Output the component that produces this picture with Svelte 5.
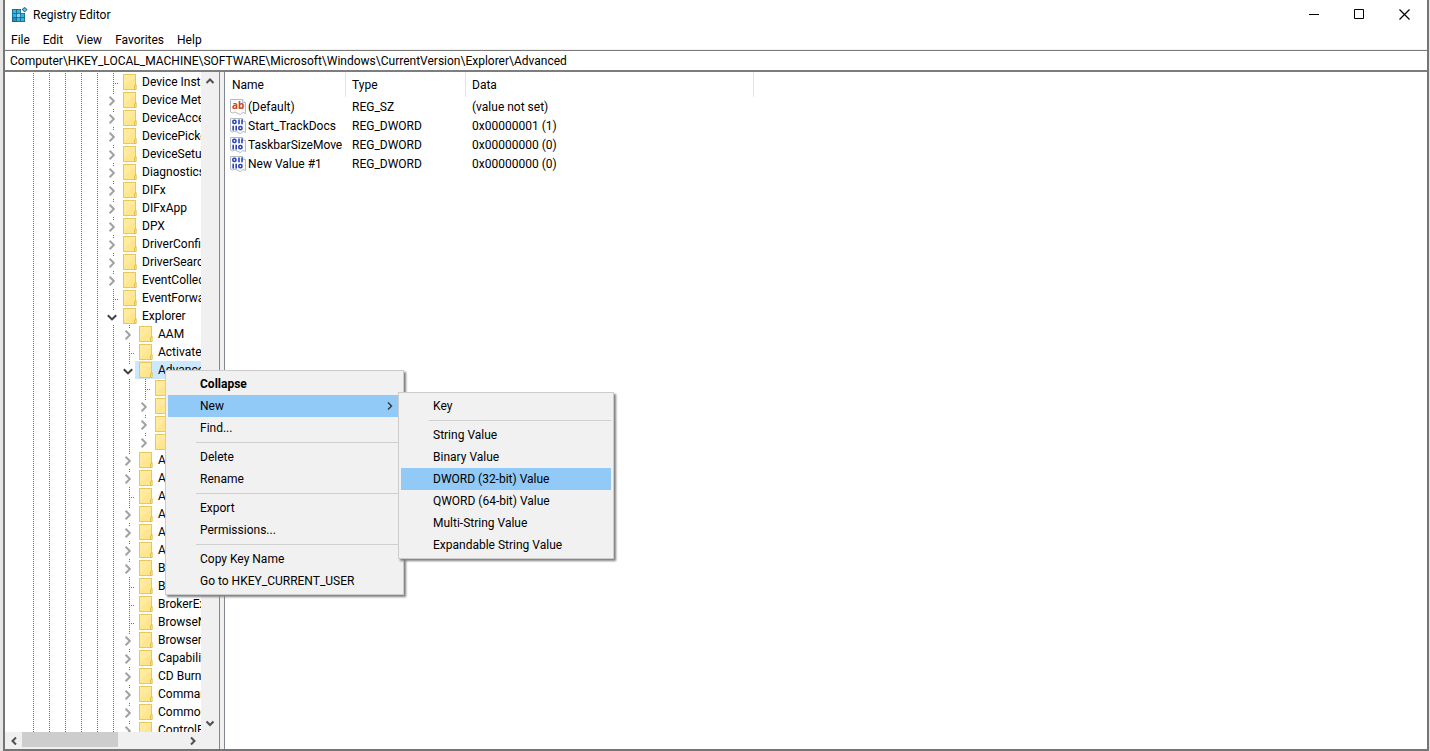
<script>
  const menus = ['File', 'Edit', 'View', 'Favorites', 'Help'];
  let path = $state('Computer\\HKEY_LOCAL_MACHINE\\SOFTWARE\\Microsoft\\Windows\\CurrentVersion\\Explorer\\Advanced');

  // kind: c = collapsed, o = open, n = no sub-keys
  const keys = [
    ['Device Installer', 0, 'n'], ['Device Metadata', 0, 'c'], ['DeviceAccess', 0, 'c'],
    ['DevicePicker', 0, 'c'], ['DeviceSetup', 0, 'c'], ['Diagnostics', 0, 'c'],
    ['DIFx', 0, 'c'], ['DIFxApp', 0, 'c'], ['DPX', 0, 'c'], ['DriverConfig', 0, 'c'],
    ['DriverSearching', 0, 'c'], ['EventCollector', 0, 'c'], ['EventForwarding', 0, 'n'],
    ['Explorer', 0, 'o'], ['AAM', 1, 'c'], ['ActivateApp', 1, 'n'], ['Advanced', 1, 'o'],
    ['', 2, 'n'], ['', 2, 'c'], ['', 2, 'c'], ['', 2, 'c'],
    ['A', 1, 'c'], ['A', 1, 'c'], ['A', 1, 'n'], ['A', 1, 'c'], ['A', 1, 'c'], ['A', 1, 'c'],
    ['B', 1, 'c'], ['B', 1, 'n'], ['BrokerExtensions', 1, 'n'], ['BrowseNewProcess', 1, 'n'],
    ['Browser Helper', 1, 'c'], ['Capabilities', 1, 'c'], ['CD Burning', 1, 'c'],
    ['CommandStore', 1, 'c'], ['CommonPlaces', 1, 'c'], ['ControlPanel', 1, 'c']
  ].map(([name, depth, kind]) => ({ name, depth, kind }));

  const values = [
    ['(Default)', 'REG_SZ', '(value not set)'],
    ['Start_TrackDocs', 'REG_DWORD', '0x00000001 (1)'],
    ['TaskbarSizeMove', 'REG_DWORD', '0x00000000 (0)'],
    ['New Value #1', 'REG_DWORD', '0x00000000 (0)']
  ];

  const contextMenu = ['Collapse', 'New', 'Find...', null, 'Delete', 'Rename', null, 'Export', 'Permissions...', null, 'Copy Key Name', 'Go to HKEY_CURRENT_USER'];
  const newMenu = ['Key', null, 'String Value', 'Binary Value', 'DWORD (32-bit) Value', 'QWORD (64-bit) Value', 'Multi-String Value', 'Expandable String Value'];
</script>

{#snippet chevron(dir)}
  <svg class="chev" width="10" height="10" viewBox="0 0 10 10" aria-hidden="true">
    {#if dir === 'up'}<path d="M1.5 7 5 3.5 8.5 7" />
    {:else if dir === 'down'}<path d="M1.5 3.5 5 7 8.5 3.5" />
    {:else if dir === 'left'}<path d="M7 1.5 3.5 5 7 8.5" />
    {:else}<path d="M3 1.5 6.5 5 3 8.5" />{/if}
  </svg>
{/snippet}

<div class="window">
  <header class="title">
    <svg width="16" height="16" viewBox="0 0 16 16" aria-hidden="true">
      <rect x="0" y="2" width="13" height="13" fill="#17597c" />
      <g fill="#35b4e2">
        <rect x="0.7" y="2.7" width="3.4" height="3.4" /><rect x="4.8" y="2.7" width="3.4" height="3.4" />
        <rect x="0.7" y="6.8" width="3.4" height="3.4" /><rect x="8.9" y="6.8" width="3.4" height="3.4" />
        <rect x="4.8" y="10.9" width="3.4" height="3.4" /><rect x="8.9" y="10.9" width="3.4" height="3.4" />
      </g>
      <rect x="4.8" y="6.8" width="3.4" height="3.4" fill="#7bdcf5" />
      <rect x="0.7" y="10.9" width="3.4" height="3.4" fill="#1f8fc4" />
      <rect x="8.9" y="2" width="4.2" height="4.1" fill="#fff" />
      <path d="M12.6 -0.2 15.6 2.6 12.6 5.4 9.6 2.6Z" fill="#2d7fa4" />
      <path d="M12.6 1.4 14 2.6 12.6 3.9 11.2 2.6Z" fill="#76d3f2" />
    </svg>
    <h1>Registry Editor</h1>
    <button aria-label="Minimize"><svg width="12" height="12" viewBox="0 0 12 12"><path d="M1 5.5H11" /></svg></button>
    <button aria-label="Maximize"><svg width="12" height="12" viewBox="0 0 12 12"><path d="M1.5 0.5H10.5V9.5H1.5Z" /></svg></button>
    <button aria-label="Close"><svg width="12" height="12" viewBox="0 0 12 12"><path stroke-width="1.2" d="M1.5 0.5 11.5 10.5M11.5 0.5 1.5 10.5" /></svg></button>
  </header>

  <nav class="menubar">
    {#each menus as m}<button>{m}</button>{/each}
  </nav>

  <div class="address"><input type="text" aria-label="Key path" bind:value={path} /></div>

  <main>
    <section class="tree">
      <div class="view">
        <ul role="tree" aria-label="Registry keys">
          {#each keys as k}
            <li role="treeitem" aria-selected={k.name === 'Advanced'} class:selected={k.name === 'Advanced'}>
              {#each Array(5 + k.depth) as _}<i class="guide"></i>{/each}
              <i class="guide toggle {k.kind}">
                {#if k.kind === 'c'}{@render chevron('right')}{:else if k.kind === 'o'}{@render chevron('down')}{/if}
              </i>
              <span class="key">
                <svg width="14" height="16" viewBox="0 0 14 16" aria-hidden="true">
                  <rect x="0.5" y="0.5" width="12" height="15" fill="#ffe58c" stroke="#e8c85c" />
                  <path d="M1 1H12V3L1 13Z" fill="#ffeca8" opacity="0.6" />
                  <path d="M11.5 15.5V11.5L13.2 10.5V15.5Z" fill="#ffe48a" stroke="#dcb944" stroke-width="0.8" />
                </svg>
                <span>{k.name}</span>
              </span>
            </li>
          {/each}
        </ul>
        <div class="vbar">
          <button aria-label="Scroll up">{@render chevron('up')}</button>
          <button aria-label="Scroll down">{@render chevron('down')}</button>
        </div>
      </div>
      <div class="hbar">
        <button aria-label="Scroll left">{@render chevron('left')}</button>
        <div class="track"><div class="thumb"></div></div>
        <button aria-label="Scroll right">{@render chevron('right')}</button>
      </div>
    </section>

    <section class="list">
      <table>
        <thead><tr><th class="name">Name</th><th class="type">Type</th><th class="data">Data</th><th></th></tr></thead>
        <tbody>
          {#each values as [name, type, data], i}
            <tr>
              <td>
                <div class="value">
                  <svg width="16" height="16" viewBox="0 0 16 16" aria-hidden="true">
                    <path d="M0.5 0.5H12.5L15.5 3.5V14.5L13 13.5 10.5 15.5 8 14.5 5 13 2.5 14 0.5 13Z" fill="#fbfbfd" stroke="#b4bac2" />
                    <path d="M12.5 0.5V3.5H15.5" fill="#fff" stroke="#b4bac2" />
                    {#if i === 0}
                      <text class="ab" x="2" y="10">ab</text>
                    {:else}
                      <g fill="none" stroke="#2a44b8" stroke-width="1.6">
                        <rect x="2.8" y="2.3" width="3.2" height="3.2" rx="1.4" />
                        <path d="M9 1.5V6.3M12 1.5V6.3M3.2 7.7V12.5M6.2 7.7V12.5" />
                        <rect x="8.8" y="8.5" width="3.2" height="3.2" rx="1.4" />
                      </g>
                    {/if}
                  </svg>
                  <span>{name}</span>
                </div>
              </td>
              <td>{type}</td><td>{data}</td><td></td>
            </tr>
          {/each}
        </tbody>
      </table>
    </section>
  </main>

  <div class="popup context" role="menu">
    {#each contextMenu as item}
      {#if !item}<hr />
      {:else if item === 'New'}
        <div class="parent">
          <button role="menuitem" class="active">{item}{@render chevron('right')}</button>
          <div class="popup sub" role="menu">
            {#each newMenu as n}
              {#if n}<button role="menuitem" class:active={n.startsWith('DWORD')}>{n}</button>{:else}<hr />{/if}
            {/each}
          </div>
        </div>
      {:else}<button role="menuitem" class:bold={item === 'Collapse'}>{item}</button>{/if}
    {/each}
  </div>
</div>

<style>
  :global(body) { margin: 0; background: #e6e6e6; }
  * { box-sizing: border-box; }
  .window {
    position: relative; display: flex; flex-direction: column; height: 100vh;
    margin: 0 1px 0 3px; border: solid #757575; border-width: 0 2px 2px;
    background: #fff; color: #000; font: 12px/18px Roboto, "Open Sans", sans-serif; overflow: hidden;
  }
  button, input { font: inherit; color: inherit; border: 0; background: none; padding: 0; margin: 0; }
  .chev { display: block; flex: none; fill: none; stroke: #505050; stroke-width: 2; }

  .title { display: flex; align-items: center; height: 30px; padding: 0 1px 0 7px; flex: none; }
  .title h1 { flex: 1; margin: 0 0 0 5px; font: inherit; }
  .title button { width: 45px; height: 28px; display: grid; place-items: center; }
  .title button svg { fill: none; stroke: #000; }
  .menubar { display: flex; gap: 13px; height: 20px; padding: 1px 6px 0; border-bottom: 1px solid #f0f0f0; flex: none; }
  .address { flex: none; height: 22px; border: solid #7d7d7d; border-width: 1px 0 2px; }
  .address input { display: block; width: 100%; height: 19px; padding: 0 5px; outline: 0; }

  main { flex: 1; min-height: 0; display: flex; background: #f0f0f0; gap: 4px; }
  .tree { width: 215px; flex: none; display: flex; flex-direction: column; border-right: 1px solid #828790; background: #fff; }
  .view { flex: 1; min-height: 0; display: flex; overflow: hidden; }
  ul { flex: 1; min-width: 0; margin: 0; padding: 1px 0 0 20px; list-style: none; overflow: hidden; }
  li { display: flex; height: 18px; }
  .guide {
    width: 16px; flex: none; display: flex; align-items: center; justify-content: center; padding-top: 2px;
    background: repeating-linear-gradient(#6e6e6e 0 1px, #fff 1px 2px) 8px 0 / 1px 18px no-repeat;
  }
  .toggle { width: 14px; }
  .guide .chev { background: #fff; width: 12px; height: 14px; stroke: #a3a3a3; stroke-width: 1.7; }
  .guide.o .chev { stroke: #404040; }
  .guide.n {
    background:
      repeating-linear-gradient(#6e6e6e 0 1px, #fff 1px 2px) 8px 0 / 1px 18px no-repeat,
      repeating-linear-gradient(90deg, #6e6e6e 0 1px, #fff 1px 2px) 8px 10px / 8px 1px no-repeat;
  }
  .key { flex: 1; display: flex; align-items: center; gap: 5px; padding-left: 4px; white-space: nowrap; }
  .key svg { flex: none; }
  .selected .key { background: #cce8ff; }
  .vbar { width: 18px; flex: none; background: #f0f0f0; display: flex; flex-direction: column; justify-content: space-between; }
  .vbar button, .hbar button { width: 17px; height: 18px; display: grid; place-items: center; }
  .hbar { flex: none; display: flex; height: 17px; padding-right: 18px; background: #f0f0f0; }
  .hbar button { height: 17px; }
  .track { flex: 1; }
  .thumb { width: 59%; height: 15px; background: #cdcdcd; }

  .list { flex: 1; min-width: 0; background: #fff; border-left: 1px solid #828790; }
  table { width: 100%; border-spacing: 0; table-layout: fixed; }
  th, td { padding: 0 0 0 6px; font-weight: 400; text-align: left; white-space: nowrap; }
  th { height: 25px; border-right: 1px solid #e5e5e5; }
  th:last-child { border: 0; }
  td { height: 19px; }
  .name { width: 121px; padding-left: 7px; }
  .type { width: 120px; }
  .data { width: 288px; }
  .value { display: flex; align-items: center; gap: 2px; }
  .value svg { flex: none; }
  .ab { font: 700 10px/10px "Open Sans", sans-serif; fill: #c8441f; }
  td:first-child { padding-left: 5px; }

  .popup { position: absolute; padding: 2px; background: #f1f1f1; border: 1px solid #ccc; box-shadow: 2px 2px 2px #808080; }
  .context { left: 160px; top: 370px; width: 239px; }
  .sub { left: 230px; top: -3px; width: 216px; z-index: 1; }
  .parent { position: relative; }
  .popup button { display: flex; align-items: center; justify-content: space-between; width: 100%; height: 22px; padding: 0 6px 0 32px; }
  .popup .active { background: #91c9f7; }
  .popup .chev { stroke: #333; stroke-width: 1.4; }
  .bold { font-weight: 700; }
  hr { height: 1px; margin: 3px 0 3px 28px; border: 0; background: #d0d0d0; }
</style>
